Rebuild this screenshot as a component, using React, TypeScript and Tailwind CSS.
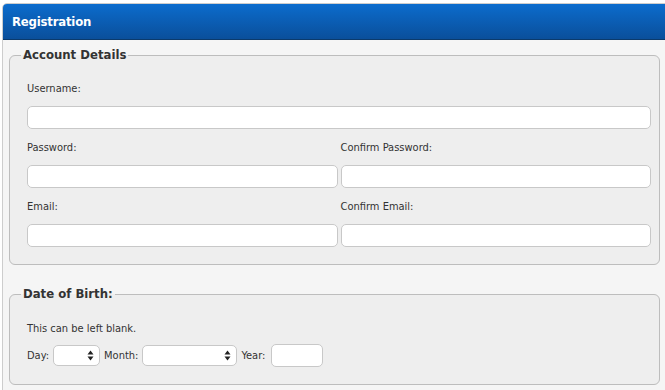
import React from "react";

const font = { fontFamily: '"DejaVu Sans Condensed", "DejaVu Sans", Verdana, sans-serif' };

function TextBox({ className = "" }: { className?: string }) {
    return (
        <input
            type="text"
            className={`h-[23px] bg-white border border-[#c8c8c8] rounded-[5px] outline-none ${className}`}
        />
    );
}

function Spinner({ width }: { width: string }) {
    return (
        <div className={`${width} h-[21px] bg-white border border-[#c8c8c8] rounded-[5px] flex items-center justify-end pr-[5px]`}>
            <svg width="7" height="11" viewBox="0 0 7 11">
                <path d="M3.5 0.5 L6.5 4.5 L0.5 4.5 Z" fill="#222" />
                <path d="M3.5 10.5 L6.5 6.5 L0.5 6.5 Z" fill="#222" />
            </svg>
        </div>
    );
}

export default function App() {
    return (
        <div className="w-[665px] h-[390px] overflow-hidden bg-white pt-[3px] pl-[2px]" style={font}>
            <div className="w-[680px] h-[400px] border border-[#cdcdcd] rounded-tl-[5px] bg-[#f5f5f5] overflow-hidden">
                <div className="h-[36px] bg-gradient-to-b from-[#0b6ccd] to-[#0a4f9b] border-b border-[#0b3a6c] flex items-center pl-[9px]">
                    <span className="text-white font-bold text-[13px] tracking-[-0.2px]">Registration</span>
                </div>

                <div className="pl-[6px] pt-[7px]">
                    <fieldset className="w-[651px] border border-[#bdbdbd] rounded-[6px] bg-[#eeeeee] pl-[17px] pr-[8px] pb-[17px]">
                        <legend className="-ml-[6px] px-[2px] text-[13px] leading-[16px] font-bold text-[#333]">Account Details</legend>
                        <div className="pt-[18px] text-[11px] leading-[16px] text-[#333]">
                            <div>Username:</div>
                            <TextBox className="w-full mt-[9px] block" />

                            <div className="grid grid-cols-2 gap-x-[3px] mt-[11px]">
                                <div>Password:</div>
                                <div>Confirm Password:</div>
                                <TextBox className="w-full mt-[9px]" />
                                <TextBox className="w-full mt-[9px]" />
                            </div>

                            <div className="grid grid-cols-2 gap-x-[3px] mt-[11px]">
                                <div>Email:</div>
                                <div>Confirm Email:</div>
                                <TextBox className="w-full mt-[9px]" />
                                <TextBox className="w-full mt-[9px]" />
                            </div>
                        </div>
                    </fieldset>

                    <fieldset className="w-[651px] mt-[21px] border border-[#bdbdbd] rounded-[6px] bg-[#eeeeee] pl-[17px] pr-[8px] pb-[17px]">
                        <legend className="-ml-[6px] px-[2px] text-[13px] leading-[16px] font-bold text-[#333]">Date of Birth:</legend>
                        <div className="pt-[19px] text-[11px] leading-[16px] text-[#333]">
                            <div>This can be left blank.</div>
                            <div className="flex items-center mt-[7px] h-[23px]">
                                <span className="mr-[4px]">Day:</span>
                                <Spinner width="w-[47px]" />
                                <span className="ml-[4px] mr-[4px]">Month:</span>
                                <Spinner width="w-[95px]" />
                                <span className="ml-[4px] mr-[6px]">Year:</span>
                                <TextBox className="w-[52px]" />
                            </div>
                        </div>
                    </fieldset>
                </div>
            </div>
        </div>
    );
}
